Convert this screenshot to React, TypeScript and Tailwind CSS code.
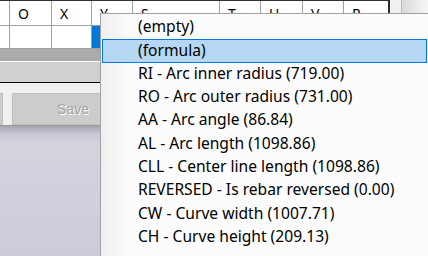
import React from "react";

const cols = [
  { w: "w-[10px]", label: "" },
  { w: "w-[42px]", label: "O" },
  { w: "w-[40px]", label: "X" },
  { w: "w-[41px]", label: "Y" },
  { w: "w-[87px]", label: "S" },
  { w: "w-[41px]", label: "T" },
  { w: "w-[42px]", label: "U" },
  { w: "w-[41px]", label: "V" },
  { w: "flex-1", label: "R" },
];

const items = [
  "(empty)",
  "(formula)",
  "RI - Arc inner radius (719.00)",
  "RO - Arc outer radius (731.00)",
  "AA - Arc angle (86.84)",
  "AL - Arc length (1098.86)",
  "CLL - Center line length (1098.86)",
  "REVERSED - Is rebar reversed (0.00)",
  "CW - Curve width (1007.71)",
  "CH - Curve height (209.13)",
];

export default function App() {
  return (
    <div className="relative w-[428px] h-[256px] overflow-hidden flex flex-col font-['Noto_Sans','Open_Sans',sans-serif] text-black bg-[#cfcdda]">
      {/* grid */}
      <div className="flex h-[49px] shrink-0">
        <div className="w-[390px] flex flex-col bg-white border-t border-[#333] border-r-2 border-r-[#2a2a2a]">
          <div className="flex h-[25px] shrink-0 border-b border-[#a0a0a0]">
            {cols.map((c, i) => (
              <div
                key={i}
                className={`${c.w} h-full border-r border-[#a0a0a0] last:border-r-0 pl-[8px] pt-[1px] text-[14px] leading-[23px]`}
              >
                {c.label}
              </div>
            ))}
          </div>
          <div className="flex flex-1 border-b border-[#a0a0a0]">
            {cols.map((c, i) => (
              <div
                key={i}
                className={`${c.w} h-full border-r border-[#a0a0a0] last:border-r-0 ${i === 3 ? "bg-[#0078d7]" : "bg-white"}`}
              />
            ))}
          </div>
        </div>
        <div className="flex-1 flex bg-[#f0f0f0]">
          <div className="w-[11px] bg-[#f0f0f0]" />
          <div className="w-[1px] bg-[#b8b8b8]" />
          <div className="flex-1 bg-gradient-to-r from-[#d9d9d9] to-[#f7f7f7]" />
        </div>
      </div>
      {/* band */}
      <div className="h-[12px] shrink-0 bg-[#ababab]" />
      <div className="h-[1px] shrink-0 bg-white" />
      <div className="h-[20px] shrink-0 bg-[#d0d0d0]" />
      <div className="h-[1px] shrink-0 bg-black" />
      {/* buttons */}
      <div className="h-[42px] shrink-0 bg-[#f0f0f0] flex items-start pt-[10px] gap-[9px] -ml-[20px]">
        <div className="w-[23px] h-[32px] bg-[#cccccc] border border-[#bfbfbf]" />
        <div className="w-[122px] h-[32px] bg-[#cccccc] border border-[#bfbfbf] flex items-center justify-center font-['Liberation_Sans',Arial,sans-serif] text-[14px] text-[#a3a3a3] [text-shadow:1px_1px_0_#ffffff]">
          Save
        </div>
      </div>
      <div className="h-[1px] shrink-0 bg-[#9a9a9a]" />
      <div className="flex-1 bg-[linear-gradient(to_bottom,#a6a4af_0px,#c9c7d3_8px,#d4d3de_18px,#cdcbd8_100%)]" />

      {/* popup menu */}
      <div className="absolute left-[100px] top-[13px] w-[340px] h-[260px] border-l border-t border-[#a0a0a0] bg-[#fcfcfc] pt-[2px] pl-[1px]">
        <div className="absolute left-0 top-0 bottom-0 w-[25px] bg-gradient-to-r from-[#efefef] to-[#fafafa]" />
        <div className="relative flex flex-col">
          {items.map((t, i) => (
            <div
              key={i}
              className={`h-[23.33px] w-[325px] flex items-center pl-[35px] text-[15.6px] leading-[20px] pb-[3px] whitespace-nowrap border ${
                i === 1 ? "bg-[#b5d7f3] border-[#0078d7]" : "border-transparent"
              }`}
            >
              {t}
            </div>
          ))}
        </div>
      </div>
    </div>
  );
}
